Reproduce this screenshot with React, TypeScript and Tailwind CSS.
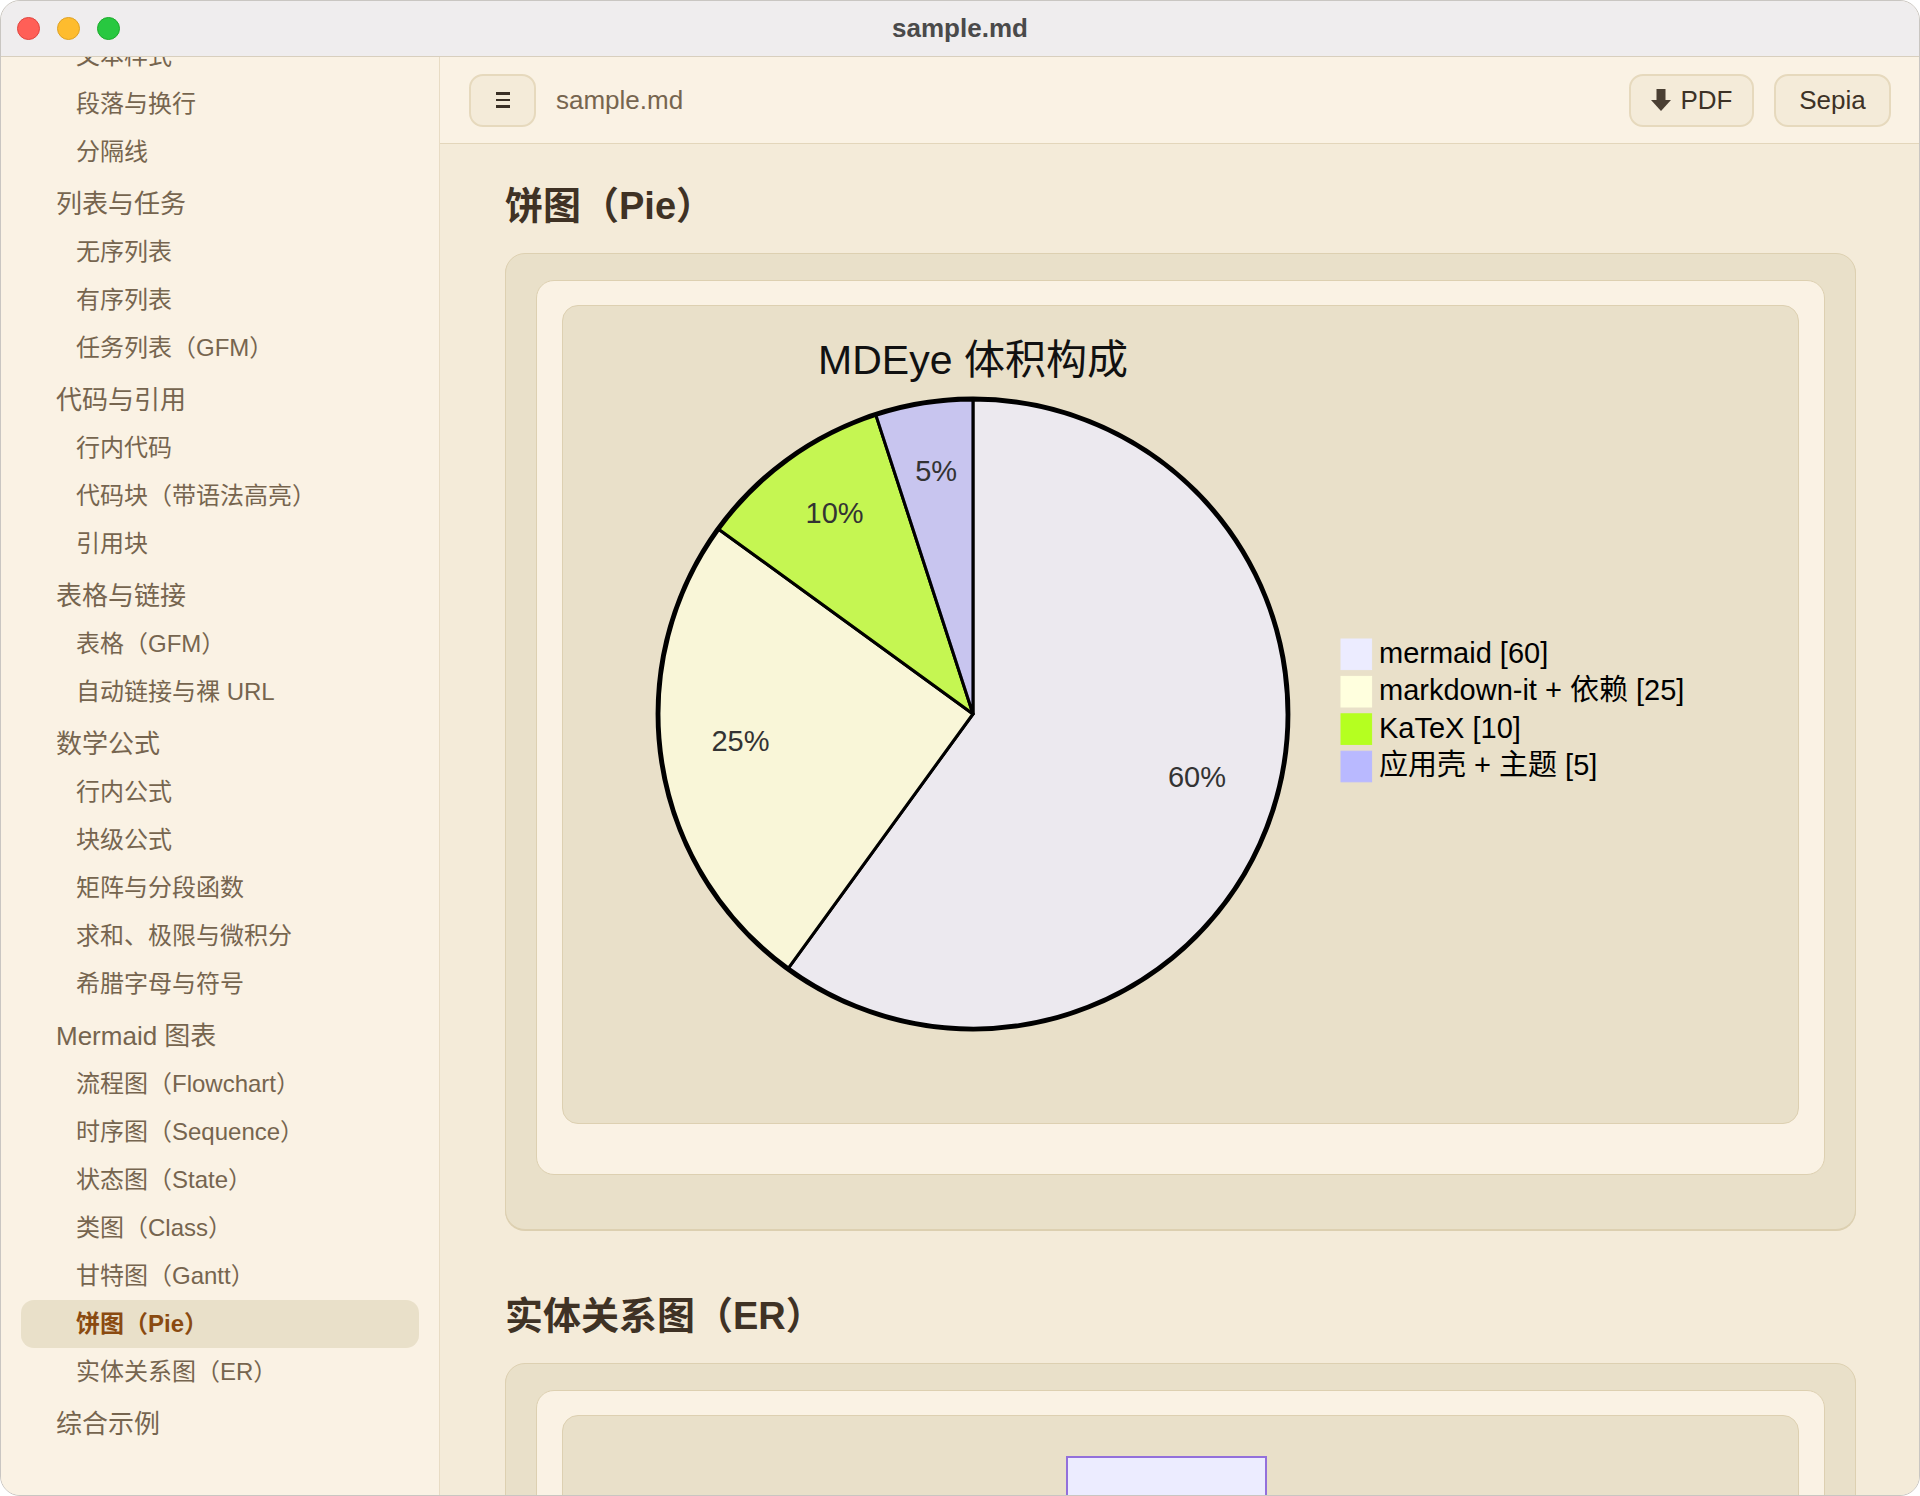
import React from "react";

const FONT = '"Liberation Sans", "Noto Sans CJK SC", sans-serif';

type Group = { group?: string; items: string[] };

const NAV: Group[] = [
  { items: ["文本样式", "段落与换行", "分隔线"] },
  { group: "列表与任务", items: ["无序列表", "有序列表", "任务列表（GFM）"] },
  { group: "代码与引用", items: ["行内代码", "代码块（带语法高亮）", "引用块"] },
  { group: "表格与链接", items: ["表格（GFM）", "自动链接与裸 URL"] },
  {
    group: "数学公式",
    items: ["行内公式", "块级公式", "矩阵与分段函数", "求和、极限与微积分", "希腊字母与符号"],
  },
  {
    group: "Mermaid 图表",
    items: [
      "流程图（Flowchart）",
      "时序图（Sequence）",
      "状态图（State）",
      "类图（Class）",
      "甘特图（Gantt）",
      "饼图（Pie）",
      "实体关系图（ER）",
    ],
  },
  { group: "综合示例", items: [] },
];

const ACTIVE = "饼图（Pie）";

function Sidebar() {
  return (
    <aside className="w-[439px] shrink-0 overflow-hidden border-r border-[#e8dcc4] bg-[#faf2e4] px-[20px]">
      <div className="mt-[-25px] flex flex-col">
        {NAV.map((g, gi) => (
          <div key={gi} className="flex flex-col">
            {g.group && (
              <div className="mt-[4px] flex h-[48px] items-center pl-[35px] text-[26px] text-[#76654f]">
                {g.group}
              </div>
            )}
            {g.items.map((it) => {
              const active = it === ACTIVE;
              return (
                <div
                  key={it}
                  className={
                    active
                      ? "flex h-[48px] items-center rounded-[13px] bg-[#e9e0c9] pl-[55px] text-[24px] font-bold text-[#8a4a10]"
                      : "flex h-[48px] items-center rounded-[13px] pl-[55px] text-[24px] text-[#76654f]"
                  }
                >
                  {it}
                </div>
              );
            })}
          </div>
        ))}
      </div>
    </aside>
  );
}

function Toolbar() {
  return (
    <div className="flex h-[87px] shrink-0 items-center border-b border-[#e3d6bb] bg-[#faf2e4] pl-[29px] pr-[28px]">
      <button className="flex h-[53px] w-[67px] flex-col items-center justify-center gap-[4px] rounded-[14px] border-2 border-[#e6d9bd] bg-[#f4ebd9]">
        <span className="block h-[2.5px] w-[14px] bg-[#3a3026]" />
        <span className="block h-[2.5px] w-[14px] bg-[#3a3026]" />
        <span className="block h-[2.5px] w-[14px] bg-[#3a3026]" />
      </button>
      <div className="ml-[20px] text-[26px] text-[#76654f]">sample.md</div>
      <div className="flex-1" />
      <button className="flex h-[53px] w-[125px] items-center justify-center gap-[10px] rounded-[14px] border-2 border-[#e6d9bd] bg-[#f4ebd9] text-[26px] text-[#3d3226]">
        <svg width="20" height="22" viewBox="0 0 20 22">
          <rect x="5.5" y="0" width="9" height="12" fill="#4a3f33" />
          <polygon points="0,11 20,11 10,22" fill="#4a3f33" />
        </svg>
        <span>PDF</span>
      </button>
      <button className="ml-[20px] flex h-[53px] w-[117px] items-center justify-center rounded-[14px] border-2 border-[#e6d9bd] bg-[#f4ebd9] text-[26px] text-[#3d3226]">
        Sepia
      </button>
    </div>
  );
}

const SLICES = [
  { label: "mermaid", value: 60, color: "#ECECFF" },
  { label: "markdown-it + 依赖", value: 25, color: "#FFFFDE" },
  { label: "KaTeX", value: 10, color: "#b5ff20" },
  { label: "应用壳 + 主题", value: 5, color: "#b9b9ff" },
];

function PieChart() {
  const cx = 410;
  const cy = 408;
  const r = 314;
  const total = SLICES.reduce((s, x) => s + x.value, 0);
  let acc = 0;
  const pt = (deg: number, rad: number) => {
    const a = (deg * Math.PI) / 180;
    return [cx + rad * Math.sin(a), cy - rad * Math.cos(a)];
  };
  const paths = SLICES.map((s) => {
    const start = (acc / total) * 360;
    acc += s.value;
    const end = (acc / total) * 360;
    const [x1, y1] = pt(start, r);
    const [x2, y2] = pt(end, r);
    const large = end - start > 180 ? 1 : 0;
    const mid = (start + end) / 2;
    const [lx, ly] = pt(mid, r * 0.75);
    return {
      d: `M ${cx} ${cy} L ${x1} ${y1} A ${r} ${r} 0 ${large} 1 ${x2} ${y2} Z`,
      color: s.color,
      lx,
      ly,
      pct: `${Math.round((s.value / total) * 100)}%`,
    };
  });
  return (
    <svg width="1234" height="817" viewBox="0 0 1234 817" className="block">
      <text
        x={cx}
        y={68}
        textAnchor="middle"
        fontSize="41"
        fill="#111"
        style={{ fontFamily: FONT }}
      >
        MDEye 体积构成
      </text>
      <circle cx={cx} cy={cy} r={r + 1.7} fill="none" stroke="#000" strokeWidth="3.4" />
      {paths.map((p, i) => (
        <path
          key={i}
          d={p.d}
          fill={p.color}
          fillOpacity={0.7}
          stroke="#000"
          strokeWidth="3"
          strokeLinejoin="round"
        />
      ))}
      {paths.map((p, i) => (
        <text
          key={"t" + i}
          x={p.lx}
          y={p.ly}
          textAnchor="middle"
          fontSize="29"
          fill="#333"
          style={{ fontFamily: FONT }}
        >
          {p.pct}
        </text>
      ))}
      {SLICES.map((s, i) => {
        const y = 333 + i * 37.4;
        return (
          <g key={"l" + i}>
            <rect x={778} y={y} width={30.6} height={30.6} fill={s.color} stroke={s.color} />
            <text
              x={816}
              y={y + 23.8}
              fontSize="29"
              fill="#000"
              style={{ fontFamily: FONT }}
            >
              {`${s.label} [${s.value}]`}
            </text>
          </g>
        );
      })}
    </svg>
  );
}

function Card({ children, innerClass }: { children: React.ReactNode; innerClass: string }) {
  return (
    <div className="rounded-[20px] border border-[#ddd0b1] bg-[#e9e0c9] px-[30px] pb-[54px] pt-[26px] shadow-[0_1px_0_#dccfb0]">
      <div className="rounded-[18px] border border-[#ddd0b1] bg-[#faf2e4] px-[25px] pb-[50px] pt-[24px]">
        <div className={"rounded-[16px] border border-[#ddd0b1] bg-[#e9e0c9] " + innerClass}>
          {children}
        </div>
      </div>
    </div>
  );
}

function Content() {
  return (
    <div className="flex min-w-0 flex-1 flex-col">
      <Toolbar />
      <div className="flex-1 overflow-hidden bg-[#f4ebd9] pl-[65px] pr-[63px] pt-[38px]">
        <h2 className="h-[48px] text-[38px] font-bold leading-[48px] text-[#3f3225]">饼图（Pie）</h2>
        <div className="mt-[23px]">
          <Card innerClass="h-[819px]">
            <PieChart />
          </Card>
        </div>
        <h2 className="mt-[62px] h-[48px] text-[38px] font-bold leading-[48px] text-[#3f3225]">
          实体关系图（ER）
        </h2>
        <div className="mt-[23px]">
          <Card innerClass="h-[400px] pt-[40px]">
            <div className="ml-[503px] h-[140px] w-[201px] border-2 border-[#9370db] bg-[#ececff]" />
          </Card>
        </div>
      </div>
    </div>
  );
}

export default function App() {
  return (
    <div className="h-[1496px] w-[1920px] overflow-hidden bg-[#ffffff]" style={{ fontFamily: FONT }}>
      <div className="flex h-full w-full flex-col overflow-hidden rounded-[20px] border border-[#c9c6c2] bg-[#faf2e4]">
        <div className="relative flex h-[56px] shrink-0 items-center justify-center border-b border-[#d8cfbe] bg-[#efedee]">
          <div className="absolute left-[16px] top-[16px] flex gap-[17px]">
            <span className="block h-[23px] w-[23px] rounded-full border border-[#e0443e] bg-[#ff5f57]" />
            <span className="block h-[23px] w-[23px] rounded-full border border-[#dea123] bg-[#febc2e]" />
            <span className="block h-[23px] w-[23px] rounded-full border border-[#1aab29] bg-[#28c840]" />
          </div>
          <div className="text-[26px] font-bold text-[#4a4a4a]">sample.md</div>
        </div>
        <div className="flex min-h-0 flex-1">
          <Sidebar />
          <Content />
        </div>
      </div>
    </div>
  );
}
